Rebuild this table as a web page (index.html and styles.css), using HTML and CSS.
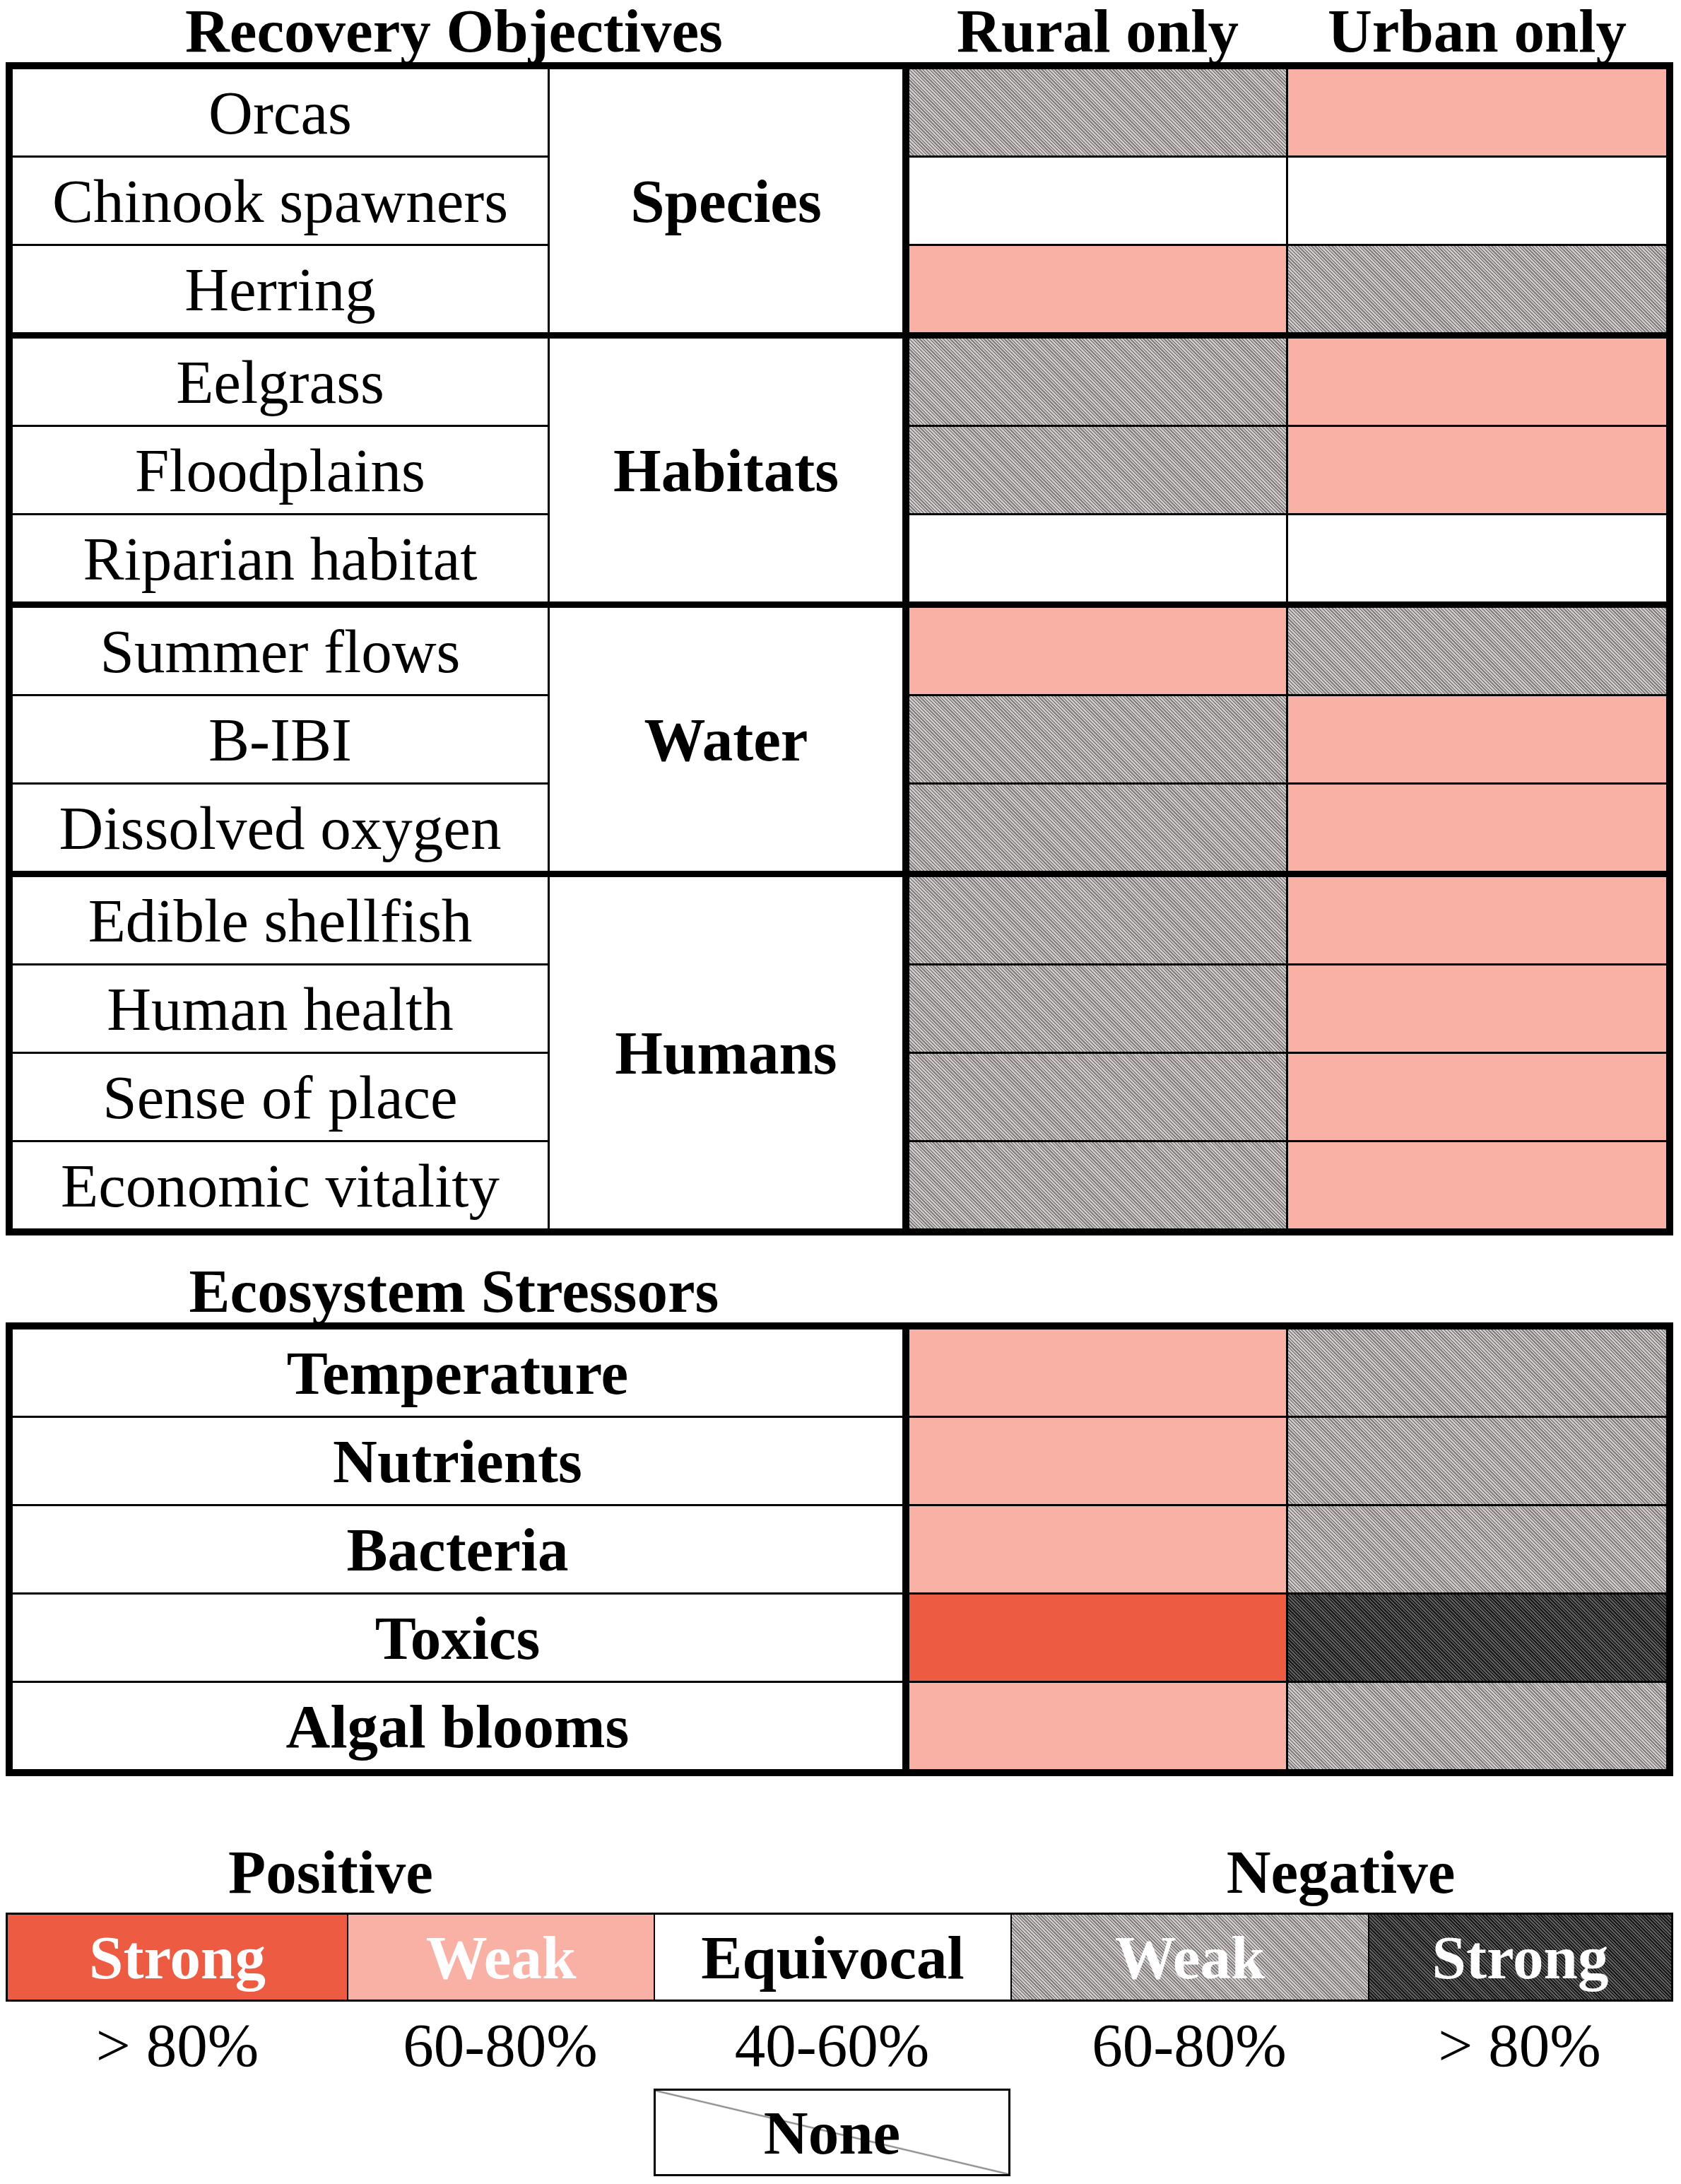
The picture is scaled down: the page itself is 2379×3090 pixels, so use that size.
FILE: index.html
```html
<!DOCTYPE html>
<html lang="en">
  <head>
    <meta charset="UTF-8" />
    <title>Recovery Objectives and Ecosystem Stressors</title>
    <link rel="stylesheet" href="styles.css">
  </head>
  <body>
    <div class="figure">
      <!-- Column headings -->
      <div class="col-heads">
        <div class="head head-wide">Recovery Objectives</div>
        <div class="head head-rural">Rural only</div>
        <div class="head head-urban">Urban only</div>
      </div>

      <div class="matrix">
        <div class="group">
          <div class="group-labels">
            <div class="labels">
              <div class="label">Orcas</div>
              <div class="label">Chinook spawners</div>
              <div class="label">Herring</div>
            </div>
            <div class="group-name">Species</div>
          </div>
          <div class="group-cells">
            <div class="cell neg-weak"></div>
            <div class="cell pos-weak"></div>
            <div class="cell equivocal"></div>
            <div class="cell equivocal"></div>
            <div class="cell pos-weak"></div>
            <div class="cell neg-weak"></div>
          </div>
        </div>

        <div class="group">
          <div class="group-labels">
            <div class="labels">
              <div class="label">Eelgrass</div>
              <div class="label">Floodplains</div>
              <div class="label">Riparian habitat</div>
            </div>
            <div class="group-name">Habitats</div>
          </div>
          <div class="group-cells">
            <div class="cell neg-weak"></div>
            <div class="cell pos-weak"></div>
            <div class="cell neg-weak"></div>
            <div class="cell pos-weak"></div>
            <div class="cell equivocal"></div>
            <div class="cell equivocal"></div>
          </div>
        </div>

        <div class="group">
          <div class="group-labels">
            <div class="labels">
              <div class="label">Summer flows</div>
              <div class="label">B-IBI</div>
              <div class="label">Dissolved oxygen</div>
            </div>
            <div class="group-name">Water</div>
          </div>
          <div class="group-cells">
            <div class="cell pos-weak"></div>
            <div class="cell neg-weak"></div>
            <div class="cell neg-weak"></div>
            <div class="cell pos-weak"></div>
            <div class="cell neg-weak"></div>
            <div class="cell pos-weak"></div>
          </div>
        </div>

        <div class="group">
          <div class="group-labels">
            <div class="labels">
              <div class="label">Edible shellfish</div>
              <div class="label">Human health</div>
              <div class="label">Sense of place</div>
              <div class="label">Economic vitality</div>
            </div>
            <div class="group-name">Humans</div>
          </div>
          <div class="group-cells">
            <div class="cell neg-weak"></div>
            <div class="cell pos-weak"></div>
            <div class="cell neg-weak"></div>
            <div class="cell pos-weak"></div>
            <div class="cell neg-weak"></div>
            <div class="cell pos-weak"></div>
            <div class="cell neg-weak"></div>
            <div class="cell pos-weak"></div>
          </div>
        </div>
      </div>

      <!-- Stressors -->
      <div class="col-heads section-gap">
        <div class="head head-wide">Ecosystem Stressors</div>
      </div>

      <div class="matrix">
        <div class="group">
          <div class="group-labels">
            <div class="labels labels-full">
              <div class="label label-bold">Temperature</div>
              <div class="label label-bold">Nutrients</div>
              <div class="label label-bold">Bacteria</div>
              <div class="label label-bold">Toxics</div>
              <div class="label label-bold">Algal blooms</div>
            </div>
          </div>
          <div class="group-cells">
            <div class="cell pos-weak"></div>
            <div class="cell neg-weak"></div>
            <div class="cell pos-weak"></div>
            <div class="cell neg-weak"></div>
            <div class="cell pos-weak"></div>
            <div class="cell neg-weak"></div>
            <div class="cell pos-strong"></div>
            <div class="cell neg-strong"></div>
            <div class="cell pos-weak"></div>
            <div class="cell neg-weak"></div>
          </div>
        </div>
      </div>

      <!-- Legend -->
      <div class="legend">
        <div class="legend-row legend-heads">
          <div class="legend-head head-pos">Positive</div>
          <div class="legend-head head-neg">Negative</div>
        </div>
        <div class="legend-row legend-bar">
          <div class="key pos-strong key-light">Strong</div>
          <div class="key pos-weak key-light">Weak</div>
          <div class="key equivocal">Equivocal</div>
          <div class="key neg-weak key-light">Weak</div>
          <div class="key neg-strong key-light">Strong</div>
        </div>
        <div class="legend-row legend-pcts">
          <div class="pct">&gt; 80%</div>
          <div class="pct">60-80%</div>
          <div class="pct">40-60%</div>
          <div class="pct">60-80%</div>
          <div class="pct">&gt; 80%</div>
        </div>
        <div class="legend-row legend-none">
          <div class="none-box">None</div>
        </div>
      </div>
    </div>
  </body>
</html>
```

FILE: styles.css
```css
* {
  margin: 0;
  padding: 0;
  box-sizing: border-box;
}

body {
  font-family: "Liberation Serif", "Times New Roman", serif;
  font-size: 87px;
  color: #000;
  background: #fff;
}

.figure {
  width: 2379px;
  padding-left: 8px;
}

/* Column headings */
.col-heads {
  display: flex;
  height: 88px;
  line-height: 88px;
  font-weight: 700;
  width: 2360px;
}

.head {
  text-align: center;
  white-space: nowrap;
}

.head-wide {
  width: 1269px;
}

.head-rural {
  width: 533px;
  margin-left: 10px;
}

.head-urban {
  width: 535px;
  margin-left: 3px;
}

.section-gap {
  margin-top: 35px;
}

/* Matrix tables */
.matrix {
  width: 2360px;
  border: 10px solid #000;
  background: #000;
  display: flex;
  flex-direction: column;
  gap: 9px;
}

.group {
  display: flex;
  gap: 10px;
}

.group-labels {
  display: flex;
  gap: 3px;
  width: 1259px;
}

.labels {
  width: 757px;
  display: flex;
  flex-direction: column;
  gap: 3px;
}

.labels-full {
  width: 1259px;
}

.label {
  height: 122px;
  background: #fff;
  display: flex;
  align-items: center;
  justify-content: center;
  white-space: nowrap;
}

.label-bold {
  font-weight: 700;
}

.group-name {
  flex: 1;
  background: #fff;
  display: flex;
  align-items: center;
  justify-content: center;
  font-weight: 700;
}

.group-cells {
  display: grid;
  grid-template-columns: 533px 535px;
  grid-auto-rows: 122px;
  gap: 3px;
}

/* Effect fills */
.equivocal {
  background: #fff;
}

.pos-weak {
  background: #f9b1a6;
}

.pos-strong {
  background: #ec5b42;
}

.neg-weak {
  background: repeating-linear-gradient(45deg, #867f7f 0 1.7px, #d2cdcd 1.7px 3.4px);
}

.neg-strong {
  background: repeating-linear-gradient(45deg, #1a1a1a 0 1.7px, #5e5e5e 1.7px 3.4px);
}

/* Legend */
.legend {
  width: 2360px;
}

.legend-row {
  display: grid;
  grid-template-columns: 480px 434px 505px 506px 429px;
}

.legend-heads {
  margin-top: 88px;
  height: 105px;
  padding: 0 3px;
  line-height: 96px;
  font-weight: 700;
}

.legend-head {
  text-align: center;
}

.head-pos {
  grid-column: 1 / 3;
}

.head-neg {
  grid-column: 4 / 6;
}

.legend-bar {
  height: 126px;
  border: 3px solid #000;
}

.key {
  display: flex;
  align-items: center;
  justify-content: center;
  font-weight: 700;
  border-left: 2px solid #000;
}

.key:first-child {
  border-left: none;
}

.key-light {
  color: #fff;
}

.legend-pcts {
  height: 123px;
  padding: 0 3px;
}

.pct {
  display: flex;
  align-items: center;
  justify-content: center;
  white-space: nowrap;
}

.legend-none {
  height: 124px;
  padding: 0 3px;
}

.none-box {
  grid-column: 3;
  border: 3px solid #000;
  display: flex;
  align-items: center;
  justify-content: center;
  font-weight: 700;
  background: linear-gradient(to top right, transparent calc(50% - 2px), #7a7a7a 50%, transparent calc(50% + 2px));
}
```
